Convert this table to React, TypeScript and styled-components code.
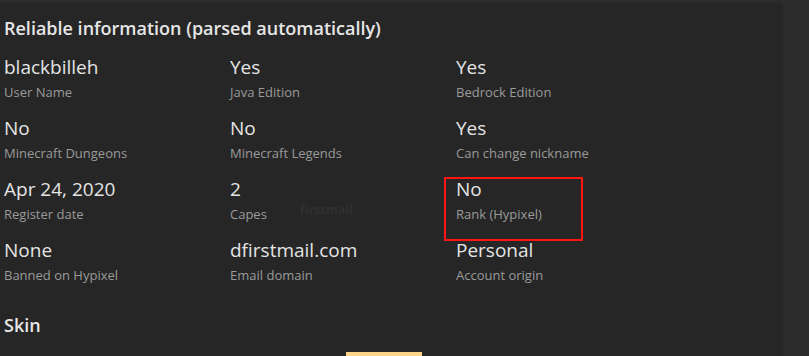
import React from "react";
import styled, { createGlobalStyle } from "styled-components";

const Global = createGlobalStyle`
  html, body { margin: 0; padding: 0; background: #2b2b2b; overflow: hidden; }
  body { font-family: "Open Sans", "Noto Sans", sans-serif; }
`;

const Panel = styled.section`
  margin-top: 3px;
  width: 783px;
  height: 353px;
  box-sizing: border-box;
  background: #262626;
  border-top-right-radius: 4px;
  padding: 13px 0 0 4px;
  position: relative;
  overflow: hidden;
`;

const Title = styled.h2`
  margin: 0;
  font-size: 18px;
  line-height: 24px;
  font-weight: 600;
  color: #e6e6e6;
`;

const Grid = styled.div`
  display: grid;
  grid-template-columns: repeat(3, 226px);
  row-gap: 14px;
  margin-top: 14px;
`;

const Cell = styled.div<{ $highlight?: boolean }>`
  position: relative;
  display: flex;
  flex-direction: column;
  &::after {
    content: "";
    display: ${(p) => (p.$highlight ? "block" : "none")};
    position: absolute;
    left: -12px;
    top: 1px;
    width: 139px;
    height: 64px;
    box-sizing: border-box;
    border: 2px solid #ff1414;
  }
`;

const Value = styled.div`
  font-size: 19px;
  line-height: 26px;
  color: #e4e4e4;
`;

const Label = styled.div`
  margin-top: 3px;
  font-size: 13px;
  line-height: 18px;
  color: #9a9a9a;
`;

const Watermark = styled.span`
  position: absolute;
  left: 300px;
  top: 198px;
  font-size: 12px;
  font-weight: 700;
  color: #303030;
  letter-spacing: 0.2px;
`;

const SkinTitle = styled(Title)`
  margin-top: 29px;
`;

const SkinPreview = styled.div`
  margin: 15px 0 0 342px;
  width: 76px;
  height: 40px;
  background: #fcd58a;
`;

const items: { value: string; label: string; highlight?: boolean }[] = [
  { value: "blackbilleh", label: "User Name" },
  { value: "Yes", label: "Java Edition" },
  { value: "Yes", label: "Bedrock Edition" },
  { value: "No", label: "Minecraft Dungeons" },
  { value: "No", label: "Minecraft Legends" },
  { value: "Yes", label: "Can change nickname" },
  { value: "Apr 24, 2020", label: "Register date" },
  { value: "2", label: "Capes" },
  { value: "No", label: "Rank (Hypixel)", highlight: true },
  { value: "None", label: "Banned on Hypixel" },
  { value: "dfirstmail.com", label: "Email domain" },
  { value: "Personal", label: "Account origin" },
];

export default function App() {
  return (
    <>
      <Global />
      <Panel>
        <Title>Reliable information (parsed automatically)</Title>
        <Grid>
          {items.map((it, i) => (
            <Cell key={i} $highlight={it.highlight}>
              <Value>{it.value}</Value>
              <Label>{it.label}</Label>
            </Cell>
          ))}
        </Grid>
        <Watermark>firstmail</Watermark>
        <SkinTitle>Skin</SkinTitle>
        <SkinPreview />
      </Panel>
    </>
  );
}
